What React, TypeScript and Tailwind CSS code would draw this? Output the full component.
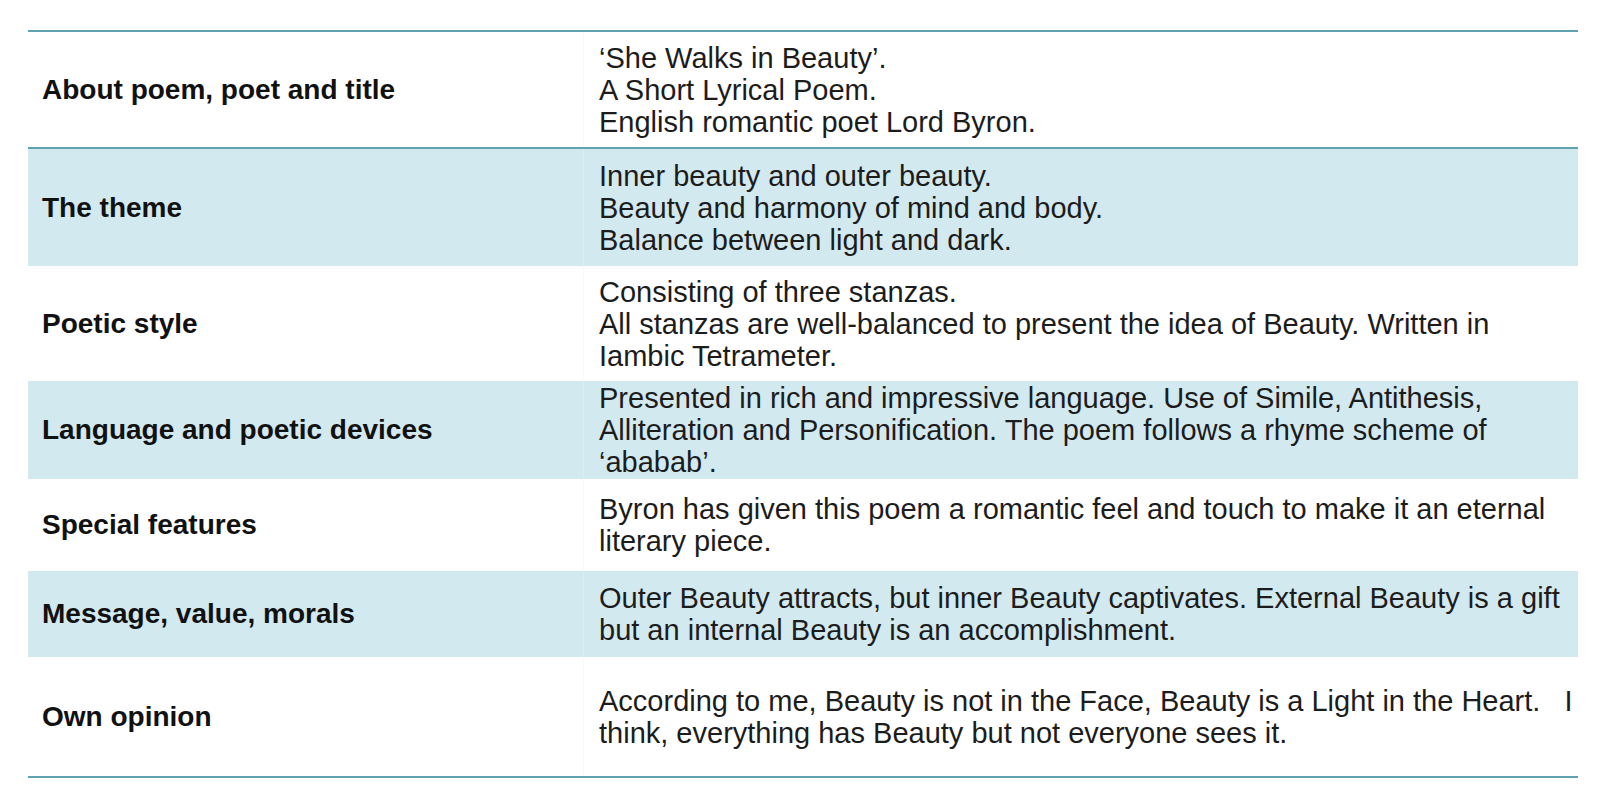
import React from "react";

type Row = {
  label: string;
  lines: string[];
  height: string;
  shaded: boolean;
};

const ROWS: Row[] = [
  {
    label: "About poem, poet and title",
    lines: ["‘She Walks in Beauty’.", "A Short Lyrical Poem.", "English romantic poet Lord Byron."],
    height: "h-[115px]",
    shaded: false,
  },
  {
    label: "The theme",
    lines: ["Inner beauty and outer beauty.", "Beauty and harmony of mind and body.", "Balance between light and dark."],
    height: "h-[117px]",
    shaded: true,
  },
  {
    label: "Poetic style",
    lines: [
      "Consisting of three stanzas.",
      "All stanzas are well-balanced to present the idea of Beauty. Written in",
      "Iambic Tetrameter.",
    ],
    height: "h-[115px]",
    shaded: false,
  },
  {
    label: "Language and poetic devices",
    lines: [
      "Presented in rich and impressive language. Use of Simile, Antithesis,",
      "Alliteration and Personification. The poem follows a rhyme scheme of",
      "‘ababab’.",
    ],
    height: "h-[98px]",
    shaded: true,
  },
  {
    label: "Special features",
    lines: ["Byron has given this poem a romantic feel and touch to make it an eternal", "literary piece."],
    height: "h-[92px]",
    shaded: false,
  },
  {
    label: "Message, value, morals",
    lines: [
      "Outer Beauty attracts, but inner Beauty captivates. External Beauty is a gift",
      "but an internal Beauty is an accomplishment.",
    ],
    height: "h-[86px]",
    shaded: true,
  },
  {
    label: "Own opinion",
    lines: [
      "According to me, Beauty is not in the Face, Beauty is a Light in the Heart.   I",
      "think, everything has Beauty but not everyone sees it.",
    ],
    height: "h-[119px]",
    shaded: false,
  },
];

function TableRow({ row, first }: { row: Row; first: boolean }) {
  return (
    <div
      className={[
        "grid grid-cols-[555px_1fr]",
        row.height,
        row.shaded ? "bg-[#d3e9f0]" : "bg-white",
        first ? "box-content border-b-2 border-[#5fa3b3]" : "",
      ].join(" ")}
    >
      {/* label */}
      <div className="flex items-center pl-[14px] text-[28px] font-bold text-[#111111]">{row.label}</div>

      {/* text */}
      <div
        className={[
          "flex flex-col justify-center pl-[15px] text-[29px] leading-[32px] text-[#1c1c1c] border-l",
          row.shaded ? "border-[#dbeef4]" : "border-[#f6fafb]",
        ].join(" ")}
      >
        {row.lines.map((line, i) => (
          <div key={i} className="whitespace-pre">
            {line}
          </div>
        ))}
      </div>
    </div>
  );
}

export default function App() {
  return (
    <div className="w-[1600px] h-[794px] bg-white pt-[30px] pl-[28px] font-['Liberation_Sans',Arial,sans-serif]">
      <div className="w-[1550px] border-t-2 border-b-2 border-[#5fa3b3]">
        {ROWS.map((row, i) => (
          <TableRow key={row.label} row={row} first={i === 0} />
        ))}
      </div>
    </div>
  );
}
